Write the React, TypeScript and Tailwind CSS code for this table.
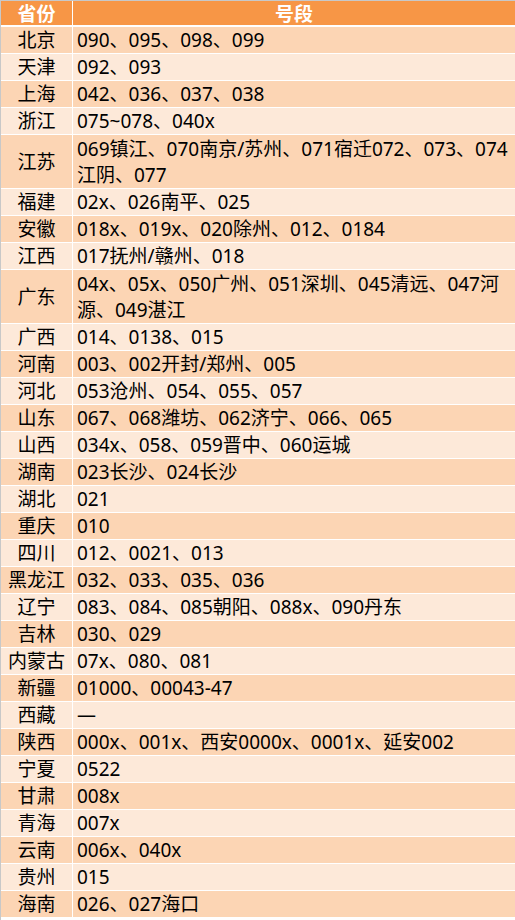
const rows: { p: string; v: string[] }[] = [
  { p: "北京", v: ["090、095、098、099"] },
  { p: "天津", v: ["092、093"] },
  { p: "上海", v: ["042、036、037、038"] },
  { p: "浙江", v: ["075~078、040x"] },
  { p: "江苏", v: ["069镇江、070南京/苏州、071宿迁072、073、074", "江阴、077"] },
  { p: "福建", v: ["02x、026南平、025"] },
  { p: "安徽", v: ["018x、019x、020除州、012、0184"] },
  { p: "江西", v: ["017抚州/赣州、018"] },
  { p: "广东", v: ["04x、05x、050广州、051深圳、045清远、047河", "源、049湛江"] },
  { p: "广西", v: ["014、0138、015"] },
  { p: "河南", v: ["003、002开封/郑州、005"] },
  { p: "河北", v: ["053沧州、054、055、057"] },
  { p: "山东", v: ["067、068潍坊、062济宁、066、065"] },
  { p: "山西", v: ["034x、058、059晋中、060运城"] },
  { p: "湖南", v: ["023长沙、024长沙"] },
  { p: "湖北", v: ["021"] },
  { p: "重庆", v: ["010"] },
  { p: "四川", v: ["012、0021、013"] },
  { p: "黑龙江", v: ["032、033、035、036"] },
  { p: "辽宁", v: ["083、084、085朝阳、088x、090丹东"] },
  { p: "吉林", v: ["030、029"] },
  { p: "内蒙古", v: ["07x、080、081"] },
  { p: "新疆", v: ["01000、00043-47"] },
  { p: "西藏", v: ["—"] },
  { p: "陕西", v: ["000x、001x、西安0000x、0001x、延安002"] },
  { p: "宁夏", v: ["0522"] },
  { p: "甘肃", v: ["008x"] },
  { p: "青海", v: ["007x"] },
  { p: "云南", v: ["006x、040x"] },
  { p: "贵州", v: ["015"] },
  { p: "海南", v: ["026、027海口"] },
];

export default function App() {
  return (
    <div
      className="w-[515px] h-[920px] overflow-hidden bg-white border-t border-l border-[#c8c8c8] text-[19px] text-black"
      style={{ fontFamily: '"Noto Sans", "Noto Sans CJK SC", sans-serif' }}
    >
      <div className="flex h-[26px] bg-[#f79646] text-white font-bold leading-[26px] border-b-2 border-white">
        <div className="w-[72px] text-center border-r border-white">省份</div>
        <div className="flex-1 text-center">号段</div>
      </div>
      {rows.map((r, i) => (
        <div
          key={r.p}
          className={`flex border-b border-white leading-[26px] ${
            r.v.length > 1 ? "h-[54px]" : "h-[27px]"
          } ${i % 2 === 0 ? "bg-[#fcd5b4]" : "bg-[#fde9d9]"}`}
        >
          <div className="w-[72px] flex items-center justify-center border-r border-white whitespace-nowrap">
            {r.p}
          </div>
          <div className="flex-1 flex flex-col justify-center pl-[4px] whitespace-nowrap">
            {r.v.map((line) => (
              <div key={line}>{line}</div>
            ))}
          </div>
        </div>
      ))}
    </div>
  );
}
